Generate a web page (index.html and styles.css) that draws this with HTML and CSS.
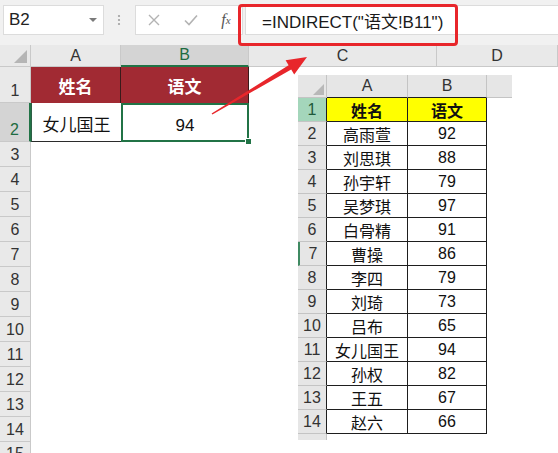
FILE: index.html
```html
<!DOCTYPE html>
<html>
<head>
<meta charset="utf-8">
<link rel="stylesheet" href="styles.css">
</head>
<body>
<div class="app">
  <div class="toolbar">
    <div class="namebox"><span class="nb-text">B2</span><span class="caret"></span></div>
    <div class="grip"><svg width="4" height="12" viewBox="0 0 4 12"><circle cx="2" cy="2" r="1.1" fill="#a0a0a0"/><circle cx="2" cy="6" r="1.1" fill="#a0a0a0"/><circle cx="2" cy="10" r="1.1" fill="#a0a0a0"/></svg></div>
    <div class="fnbox">
      <span class="fb fb-x"><svg width="12" height="12" viewBox="0 0 12 12"><path d="M1 1 L11 11 M11 1 L1 11" stroke="#b3b3b3" stroke-width="1.4" fill="none"/></svg></span>
      <span class="fb fb-ok"><svg width="14" height="12" viewBox="0 0 14 12"><path d="M1 6.5 L5 10.5 L13 1.5" stroke="#b3b3b3" stroke-width="1.6" fill="none"/></svg></span>
      <span class="fb fb-fx"><i>f</i><sub>x</sub></span>
    </div>
    <div class="formula">=INDIRECT("语文!B11")</div>
  </div>

  <div class="sheet">
    <div class="hd corner"><span class="tri"></span></div>
    <div class="hd colh">A</div>
    <div class="hd colh sel">B</div>
    <div class="hd colh">C</div>
    <div class="hd colh">D</div>

    <div class="rh">1</div>
    <div class="cell red">姓名</div>
    <div class="cell red">语文</div>
    <div class="blank span2"></div>

    <div class="rh sel">2</div>
    <div class="cell data a2">女儿国王</div>
    <div class="cell data b2">94<span class="handle"></span></div>
    <div class="blank span2"></div>

    <div class="rh">3</div><div class="blank span4"></div>
    <div class="rh">4</div><div class="blank span4"></div>
    <div class="rh">5</div><div class="blank span4"></div>
    <div class="rh">6</div><div class="blank span4"></div>
    <div class="rh">7</div><div class="blank span4"></div>
    <div class="rh">8</div><div class="blank span4"></div>
    <div class="rh">9</div><div class="blank span4"></div>
    <div class="rh">10</div><div class="blank span4"></div>
    <div class="rh">11</div><div class="blank span4"></div>
    <div class="rh">12</div><div class="blank span4"></div>
    <div class="rh">13</div><div class="blank span4"></div>
    <div class="rh">14</div><div class="blank span4"></div>
    <div class="rh rlast">15</div><div class="blank span4"></div>
  </div>

  <div class="redbox"></div>

  <div class="picture">
    <div class="ph pcorner"><span class="ptri"></span></div>
    <div class="ph">A</div>
    <div class="ph">B</div>
    <div class="ph pend"></div>

    <div class="prh psel">1</div><div class="pc yel">姓名</div><div class="pc yel">语文</div><div class="pblank"></div>
    <div class="prh">2</div><div class="pc">高雨萱</div><div class="pc">92</div><div class="pblank"></div>
    <div class="prh">3</div><div class="pc">刘思琪</div><div class="pc">88</div><div class="pblank"></div>
    <div class="prh">4</div><div class="pc">孙宇轩</div><div class="pc">79</div><div class="pblank"></div>
    <div class="prh">5</div><div class="pc">吴梦琪</div><div class="pc">97</div><div class="pblank"></div>
    <div class="prh">6</div><div class="pc">白骨精</div><div class="pc">91</div><div class="pblank"></div>
    <div class="prh pmark">7</div><div class="pc">曹操</div><div class="pc">86</div><div class="pblank"></div>
    <div class="prh">8</div><div class="pc">李四</div><div class="pc">79</div><div class="pblank"></div>
    <div class="prh">9</div><div class="pc">刘琦</div><div class="pc">73</div><div class="pblank"></div>
    <div class="prh">10</div><div class="pc">吕布</div><div class="pc">65</div><div class="pblank"></div>
    <div class="prh">11</div><div class="pc">女儿国王</div><div class="pc">94</div><div class="pblank"></div>
    <div class="prh">12</div><div class="pc">孙权</div><div class="pc">82</div><div class="pblank"></div>
    <div class="prh">13</div><div class="pc">王五</div><div class="pc">67</div><div class="pblank"></div>
    <div class="prh">14</div><div class="pc">赵六</div><div class="pc">66</div><div class="pblank"></div>
    <div class="prh plast"></div><div class="pblank plastrow"></div>
  </div>

  <svg class="arrow" width="558" height="453" viewBox="0 0 558 453">
    <polygon points="211.6,113.5 288.6,65.2 285.6,60.2 307,57 294.2,74.4 291.2,69.4 212.4,114.5" fill="#e8262b"/>
  </svg>
</div>
</body>
</html>
```

FILE: styles.css
```css
* { box-sizing: border-box; }
html, body { margin: 0; padding: 0; background: #fff; }
body {
  font-family: "Liberation Sans", "Noto Sans CJK SC", sans-serif;
  color: #111;
}
.app {
  position: relative;
  width: 558px;
  height: 453px;
  overflow: hidden;
  background: #fff;
}

/* toolbar */
.toolbar {
  height: 45px;
  background: #f1f1f1;
  display: flex;
  align-items: flex-start;
  padding-top: 5px;
}
.namebox {
  margin-left: 3px;
  width: 101px;
  height: 30px;
  background: #fff;
  border: 1px solid #dcdcdc;
  display: flex;
  align-items: center;
  justify-content: space-between;
  padding: 0 6px 0 5px;
}
.nb-text { font-size: 17px; color: #222; }
.caret {
  width: 0; height: 0;
  border-left: 4px solid transparent;
  border-right: 4px solid transparent;
  border-top: 4px solid #7a7a7a;
}
.grip {
  width: 30px;
  height: 30px;
  display: flex;
  align-items: center;
  justify-content: center;
}
.fnbox {
  margin-left: 1px;
  width: 108px;
  height: 30px;
  background: #fff;
  border: 1px solid #dcdcdc;
  display: flex;
  align-items: center;
}
.fb { display: flex; align-items: center; justify-content: center; height: 100%; }
.fb-x { width: 36px; }
.fb-ok { width: 38px; }
.fb-fx {
  width: 32px;
  font-family: "Liberation Serif", serif;
  font-size: 16px;
  color: #555;
}
.fb-fx i { font-style: italic; }
.fb-fx sub { font-size: 11px; font-style: italic; vertical-align: -3px; }
.formula {
  margin-left: 2px;
  flex: 1;
  height: 30px;
  background: #fff;
  border: 1px solid #dcdcdc;
  border-right: none;
  padding-left: 16px;
  display: flex;
  align-items: center;
  font-size: 17px;
  color: #1a1a1a;
}

/* sheet */
.sheet {
  display: grid;
  grid-template-columns: 31px 90px 128px 188px 1fr;
  grid-template-rows: 22px 36px 39px repeat(12, 25px) 11px;
}
.hd {
  background: #e9e9e9;
  border-right: 1px solid #c9c9c9;
  border-bottom: 1px solid #c9c9c9;
  display: flex;
  align-items: center;
  justify-content: center;
  font-size: 16px;
  color: #333;
}
.corner { align-items: flex-end; justify-content: flex-end; padding: 0 3px 3px 0; }
.tri {
  width: 0; height: 0;
  border-left: 13px solid transparent;
  border-bottom: 13px solid #b5b5b5;
}
.colh.sel {
  background: #d4d4d4;
  color: #1e6b41;
  border-bottom: 2px solid #217346;
}
.rh {
  background: #e9e9e9;
  border-right: 1px solid #c9c9c9;
  border-bottom: 1px solid #c9c9c9;
  display: flex;
  align-items: flex-end;
  justify-content: center;
  padding-bottom: 2px;
  font-size: 16px;
  color: #333;
  overflow: hidden;
}
.rh.rlast {
  align-items: flex-start;
  padding: 3px 0 0;
  border-bottom: none;
  line-height: 18px;
}
.rh.sel {
  background: #d4d4d4;
  color: #1e6b41;
  border-right: 2px solid #217346;
}
.blank { background: #fff; }
.span2 { grid-column: span 2; }
.span4 { grid-column: span 4; }
.cell {
  display: flex;
  justify-content: center;
  font-size: 17px;
}
.red {
  background: #a12a33;
  color: #fff;
  font-weight: bold;
  align-items: center;
  border-right: 1px solid #3a1a1a;
}
.data {
  align-items: flex-end;
  padding-bottom: 5px;
  color: #111;
}
.a2 {
  border-left: 1px solid #2c5f45;
  border-bottom: 1px solid #2b2b2b;
}
.b2 {
  position: relative;
  border: 2px solid #217346;
  padding-bottom: 4px;
}
.handle {
  position: absolute;
  right: -5px;
  bottom: -5px;
  width: 7px;
  height: 7px;
  background: #217346;
  border: 1px solid #fff;
}

/* overlays */
.redbox {
  position: absolute;
  left: 238px;
  top: 4px;
  width: 220px;
  height: 42px;
  border: 3px solid #e8262b;
  border-radius: 4px;
}
.arrow {
  position: absolute;
  left: 0;
  top: 0;
  pointer-events: none;
}

/* embedded picture */
.picture {
  position: absolute;
  left: 298px;
  top: 75px;
  width: 214px;
  height: 365px;
  background: #fff;
  display: grid;
  grid-template-columns: 29px 81px 79px 25px;
  grid-template-rows: 23px repeat(14, 24px) 6px;
  font-size: 16px;
}
.ph {
  background: #e6e6e6;
  border-right: 1px solid #c4c4c4;
  border-bottom: 1px solid #1e1e1e;
  display: flex;
  align-items: center;
  justify-content: center;
  color: #333;
}
.pend { border-right: none; border-bottom: 1px solid #c4c4c4; }
.pcorner { align-items: flex-end; justify-content: flex-end; padding: 0 2px 2px 0; border-bottom-color: #c4c4c4; }
.ptri {
  width: 0; height: 0;
  border-left: 11px solid transparent;
  border-bottom: 11px solid #b8b8b8;
}
.prh {
  background: #e6e6e6;
  border-right: 1px solid #1e1e1e;
  border-bottom: 1px solid #c4c4c4;
  display: flex;
  align-items: center;
  justify-content: center;
  color: #333;
}
.prh.psel { background: #a4d6bb; color: #1e5a3a; }
.prh.pmark { border-left: 2px solid #3f8a62; }
.prh.plast { border-right: 1px solid #c4c4c4; border-bottom: none; }
.pc {
  background: #fff;
  border-right: 1px solid #1e1e1e;
  border-bottom: 1px solid #1e1e1e;
  display: flex;
  align-items: center;
  justify-content: center;
  color: #111;
}
.pc.yel { background: #ffff00; font-weight: bold; }
.pblank { background: #fff; }
.plastrow { grid-column: span 3; }
```
